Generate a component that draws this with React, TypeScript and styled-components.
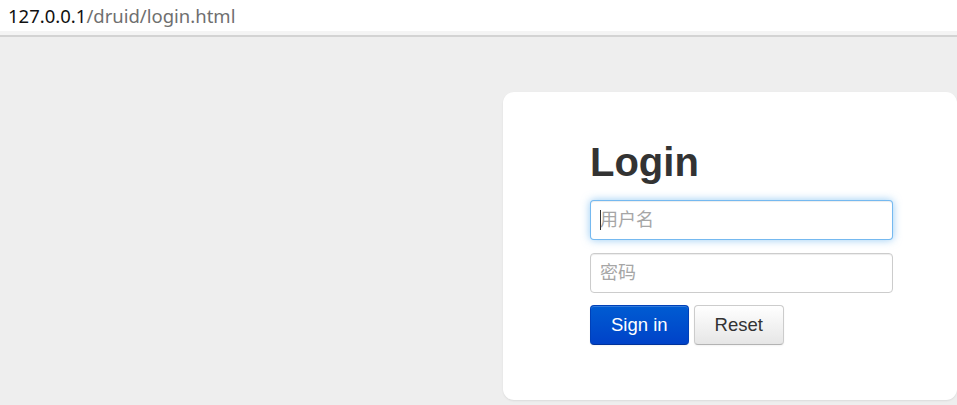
import React from "react";
import styled, { createGlobalStyle } from "styled-components";

const GlobalStyle = createGlobalStyle`
    html, body {
        margin: 0;
        padding: 0;
        height: 100%;
        overflow: hidden;
        background: #eeeeee;
    }
    #root {
        height: 100%;
    }
`;

const Page = styled.div`
    display: flex;
    flex-direction: column;
    height: 100%;
    font-family: "Liberation Sans", Arial, "Noto Sans CJK SC", sans-serif;
`;

const AddressBar = styled.div`
    height: 31px;
    background: #ffffff;
    display: flex;
    align-items: center;
    padding-left: 8px;
    font-family: "Noto Sans", "Open Sans", sans-serif;
    font-size: 18.5px;
    color: #6f6f6f;
    white-space: nowrap;
`;

const Host = styled.span`
    color: #111111;
`;

const BarShade = styled.div`
    height: 4px;
    background: #f4f4f4;
    border-bottom: 2px solid #d3d3d3;
`;

const Main = styled.main`
    flex: 1;
    background: #eeeeee;
    padding: 55px 0 0 503px;
`;

const Card = styled.div`
    width: 454px;
    height: 308px;
    box-sizing: border-box;
    background: #ffffff;
    border-radius: 11px;
    box-shadow: 0 1px 2px rgba(0, 0, 0, 0.08);
    padding: 50px 0 0 87px;
`;

const Title = styled.h1`
    margin: 0 0 18px;
    font-size: 40px;
    line-height: 40px;
    font-weight: bold;
    color: #333333;
`;

const Form = styled.form`
    display: flex;
    flex-direction: column;
    align-items: flex-start;
`;

const FieldWrap = styled.div`
    position: relative;
    margin: 0 0 13px;
`;

// text cursor drawn over the focused field
const Caret = styled.span`
    position: absolute;
    left: 10px;
    top: 10px;
    width: 1px;
    height: 20px;
    background: #333333;
    pointer-events: none;
`;

const Field = styled.input<{ $focused?: boolean }>`
    display: block;
    width: 303px;
    height: 40px;
    box-sizing: border-box;
    margin: 0;
    padding: 0 9px;
    font-family: "Liberation Sans", Arial, "Noto Sans CJK SC", sans-serif;
    font-size: 18px;
    color: #555555;
    background: #ffffff;
    border-radius: 4px;
    outline: none;
    caret-color: transparent;
    border: 1px solid ${p => (p.$focused ? "rgba(82, 168, 236, 0.8)" : "#cccccc")};
    box-shadow: ${p =>
        p.$focused
            ? "inset 0 1px 1px rgba(0,0,0,.075), 0 0 8px rgba(82,168,236,.6)"
            : "inset 0 1px 1px rgba(0,0,0,.075)"};

    &::placeholder {
        color: #a6a6a6;
    }
`;

const Actions = styled.div`
    display: flex;
    gap: 5px;
    margin-top: -1px;
`;

const Button = styled.button<{ $primary?: boolean }>`
    height: 40px;
    padding: 0 20px;
    font-family: "Liberation Sans", Arial, sans-serif;
    font-size: 18.5px;
    border-radius: 4px;
    cursor: pointer;
    color: ${p => (p.$primary ? "#ffffff" : "#333333")};
    background: ${p =>
        p.$primary
            ? "linear-gradient(to bottom, #005cd2, #0042c8)"
            : "linear-gradient(to bottom, #ffffff, #e6e6e6)"};
    border: 1px solid ${p => (p.$primary ? "#0040b8" : "#cccccc")};
    border-bottom-color: ${p => (p.$primary ? "#00329a" : "#b3b3b3")};
    box-shadow: inset 0 1px 0 rgba(255, 255, 255, 0.2), 0 1px 2px rgba(0, 0, 0, 0.05);
`;

export default function App() {
    return (
        <Page>
            <GlobalStyle />
            <AddressBar>
                <Host>127.0.0.1</Host>/druid/login.html
            </AddressBar>
            <BarShade />
            <Main>
                <Card>
                    <Title>Login</Title>
                    <Form onSubmit={e => e.preventDefault()}>
                        <FieldWrap>
                            <Field $focused type="text" placeholder="用户名" />
                            <Caret />
                        </FieldWrap>
                        <FieldWrap>
                            <Field type="password" placeholder="密码" />
                        </FieldWrap>
                        <Actions>
                            <Button $primary type="submit">Sign in</Button>
                            <Button type="reset">Reset</Button>
                        </Actions>
                    </Form>
                </Card>
            </Main>
        </Page>
    );
}
